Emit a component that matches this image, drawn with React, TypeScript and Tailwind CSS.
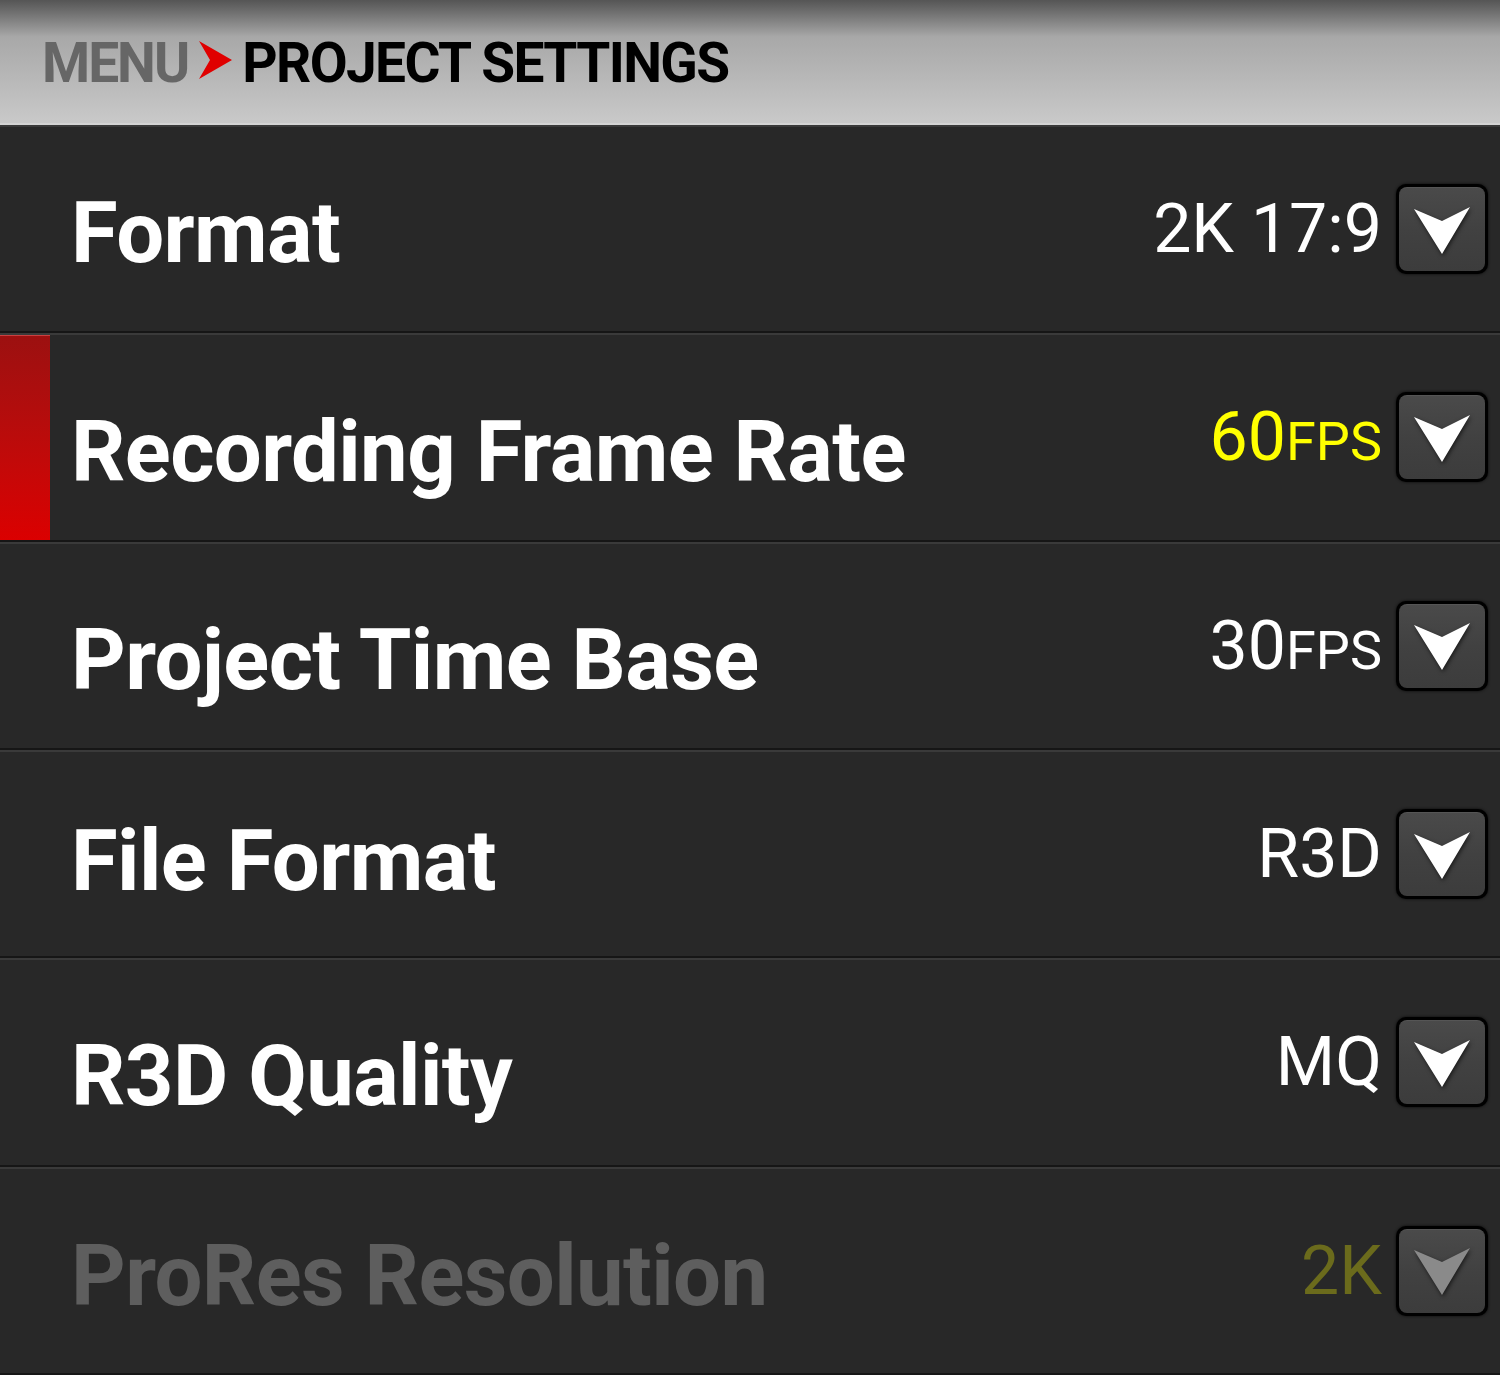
const rows = [
  { label: "Format", value: "2K 17:9", pt: 8 },
  { label: "Recording Frame Rate", value: "60", unit: "FPS", active: true, pt: 30 },
  { label: "Project Time Base", value: "30", unit: "FPS", pt: 30 },
  { label: "File Format", value: "R3D", pt: 14 },
  { label: "R3D Quality", value: "MQ", pt: 28 },
  { label: "ProRes Resolution", value: "2K", disabled: true, pt: 12 },
];

function DropButton({ disabled }: { disabled?: boolean }) {
  return (
    <div className="w-[92px] h-[90px] rounded-[10px] bg-black p-[3px] shadow-[0_0_3px_rgba(0,0,0,0.8)]">
      <div className="w-full h-full rounded-[8px] bg-gradient-to-b from-[#4a4a4a] via-[#414141] to-[#3c3c3c] border-t border-[#555] flex items-center justify-center">
        <svg width="60" height="52" viewBox="0 0 60 52" className="drop-shadow-[1px_2px_2px_rgba(0,0,0,0.6)]">
          <path d="M2 5 L30 17 L58 3 L30 50 Z" fill={disabled ? "#8a8a8a" : "#ffffff"} />
        </svg>
      </div>
    </div>
  );
}

export default function App() {
  return (
    <div
      className="w-[1500px] h-[1375px] flex flex-col bg-[#282828] overflow-hidden"
      style={{ fontFamily: "Roboto, 'Liberation Sans', sans-serif" }}
    >
      <div className="h-[125px] shrink-0 bg-gradient-to-b from-[#555] via-[#a8a8a8] via-30% to-[#c9c9c9] border-b-2 border-[#d4d4d4] flex items-center pl-[42px] pt-[4px]">
        <span className="text-[55px] font-bold text-[#666] tracking-[-2px] leading-none">MENU</span>
        <svg width="34" height="40" viewBox="0 0 34 40" className="ml-[11px] mr-[9px] mt-[-6px]">
          <path d="M0 0 L33 19 L0 38 L11 19 Z" fill="#e00000" />
        </svg>
        <span className="text-[55px] font-bold text-black tracking-[-1.6px] leading-none whitespace-nowrap">
          PROJECT SETTINGS
        </span>
      </div>
      {rows.map((r) => (
        <div
          key={r.label}
          className="flex-1 flex border-t-2 border-[#3a3a3a] border-b-2 border-b-[#161616] bg-[#282828]"
        >
          {r.active ? (
            <div className="w-[50px] shrink-0 bg-gradient-to-b from-[#9c1010] to-[#db0000] border-t border-[#c84040]" />
          ) : (
            <div className="w-[50px] shrink-0" />
          )}
          <div className="flex-1 flex items-center pl-[21px] pr-[12px]">
            <span
              className={
                "flex-1 text-[85px] font-bold leading-none tracking-[-0.6px] " +
                (r.disabled ? "text-[#5e5e5e]" : "text-white")
              }
              style={{ paddingTop: r.pt }}
            >
              {r.label}
            </span>
            <span
              className={
                "text-[68px] leading-none mr-[14px] " +
                (r.disabled ? "text-[#6b6b1c]" : r.active ? "text-[#ffff00]" : "text-white")
              }
            >
              {r.value}
              {r.unit && <span className="text-[54px]">{r.unit}</span>}
            </span>
            <DropButton disabled={r.disabled} />
          </div>
        </div>
      ))}
    </div>
  );
}
